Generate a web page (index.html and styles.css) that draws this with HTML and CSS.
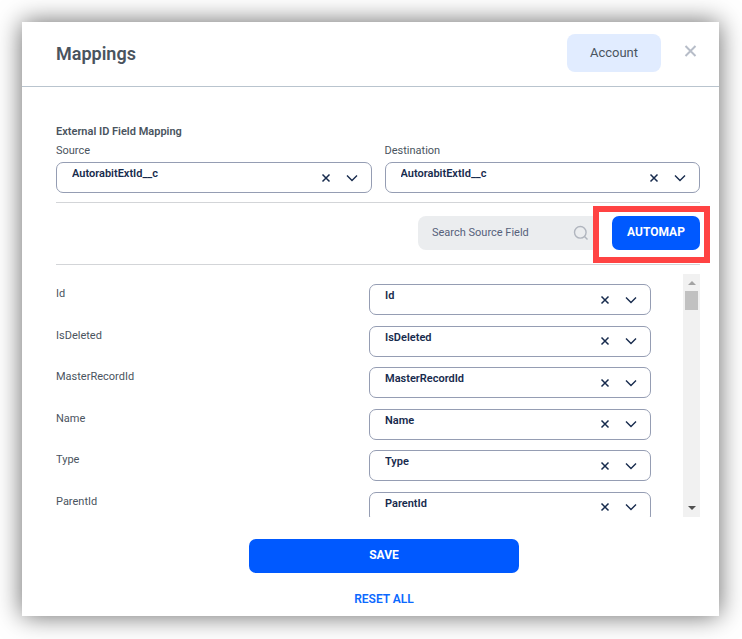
FILE: index.html
```html
<!DOCTYPE html>
<html lang="en">
<head>
<meta charset="utf-8">
<title>Mappings</title>
<link rel="stylesheet" href="styles.css">
</head>
<body>
<svg class="defs" aria-hidden="true">
  <symbol id="cross" viewBox="0 0 10 10"><path d="M1.5 1.5l7 7M8.5 1.5l-7 7"/></symbol>
  <symbol id="chevron" viewBox="0 0 12 8"><path d="M1 1.5l5 5 5-5"/></symbol>
</svg>
<main class="modal">
  <header class="header">
    <h1 class="title">Mappings</h1>
    <button class="object" type="button">Account</button>
    <button class="close" type="button" aria-label="Close"><svg viewBox="0 0 12 12"><path d="M1 1l10 10M11 1L1 11"/></svg></button>
  </header>
  <div class="body">
    <h2 class="subtitle">External ID Field Mapping</h2>
    <div class="pair">
      <div class="field">
        <label class="label" for="source">Source</label>
        <div class="picker">
          <select id="source"><option>AutorabitExtId__c</option></select>
          <button class="clear" type="button" aria-label="Clear source"><svg><use href="#cross"/></svg></button>
          <svg class="arrow"><use href="#chevron"/></svg>
        </div>
      </div>
      <div class="field">
        <label class="label" for="destination">Destination</label>
        <div class="picker">
          <select id="destination"><option>AutorabitExtId__c</option></select>
          <button class="clear" type="button" aria-label="Clear destination"><svg><use href="#cross"/></svg></button>
          <svg class="arrow"><use href="#chevron"/></svg>
        </div>
      </div>
    </div>
    <div class="toolbar">
      <div class="search">
        <input type="text" placeholder="Search Source Field" aria-label="Search Source Field">
        <svg viewBox="0 0 16 16"><circle cx="7.3" cy="7.3" r="5.8"/><path d="M11.5 11.5l3 3"/></svg>
      </div>
      <div class="highlight"><button class="primary automap" type="button">AUTOMAP</button></div>
    </div>
    <div class="mappings">
      <div class="list">
        <div class="rows">
          <div class="row">
            <label class="label" for="f1">Id</label>
            <div class="picker"><select id="f1"><option>Id</option></select><button class="clear" type="button" aria-label="Clear Id"><svg><use href="#cross"/></svg></button><svg class="arrow"><use href="#chevron"/></svg></div>
          </div>
          <div class="row">
            <label class="label" for="f2">IsDeleted</label>
            <div class="picker"><select id="f2"><option>IsDeleted</option></select><button class="clear" type="button" aria-label="Clear IsDeleted"><svg><use href="#cross"/></svg></button><svg class="arrow"><use href="#chevron"/></svg></div>
          </div>
          <div class="row">
            <label class="label" for="f3">MasterRecordId</label>
            <div class="picker"><select id="f3"><option>MasterRecordId</option></select><button class="clear" type="button" aria-label="Clear MasterRecordId"><svg><use href="#cross"/></svg></button><svg class="arrow"><use href="#chevron"/></svg></div>
          </div>
          <div class="row">
            <label class="label" for="f4">Name</label>
            <div class="picker"><select id="f4"><option>Name</option></select><button class="clear" type="button" aria-label="Clear Name"><svg><use href="#cross"/></svg></button><svg class="arrow"><use href="#chevron"/></svg></div>
          </div>
          <div class="row">
            <label class="label" for="f5">Type</label>
            <div class="picker"><select id="f5"><option>Type</option></select><button class="clear" type="button" aria-label="Clear Type"><svg><use href="#cross"/></svg></button><svg class="arrow"><use href="#chevron"/></svg></div>
          </div>
          <div class="row">
            <label class="label" for="f6">ParentId</label>
            <div class="picker"><select id="f6"><option>ParentId</option></select><button class="clear" type="button" aria-label="Clear ParentId"><svg><use href="#cross"/></svg></button><svg class="arrow"><use href="#chevron"/></svg></div>
          </div>
        </div>
      </div>
      <div class="scrollbar" aria-hidden="true">
        <svg class="up" viewBox="0 0 8 4"><path d="M4 0l4 4H0z"/></svg>
        <div class="thumb"></div>
        <svg class="down" viewBox="0 0 8 4"><path d="M0 0h8L4 4z"/></svg>
      </div>
    </div>
  </div>
  <footer class="footer">
    <button class="primary save" type="button">SAVE</button>
    <button class="reset" type="button">RESET ALL</button>
  </footer>
</main>
</body>
</html>
```
FILE: styles.css
```css
* {
  box-sizing: border-box;
}

body {
  margin: 0;
  padding: 22px 23px 23px 22px;
  background: #fff;
  color: #4a545e;
  font: 11px/18px Roboto, "Liberation Sans", sans-serif;
}

button,
input,
select {
  margin: 0;
  padding: 0;
  border: 0;
  background: none;
  color: inherit;
  font: inherit;
}

svg {
  display: block;
  fill: none;
  stroke: #172b4d;
}

.defs {
  display: none;
}

.modal {
  background: #fff;
  box-shadow: 0 0 24px rgba(0, 0, 0, 0.6);
}

.header {
  display: flex;
  align-items: flex-start;
  height: 65px;
  padding: 12px 22px 0 34px;
  border-bottom: 1px solid #b9c4ce;
}

.title {
  flex: 1;
  margin: 0;
  font-size: 18px;
  line-height: 40px;
  font-weight: 600;
}

.object {
  width: 94px;
  height: 38px;
  border-radius: 8px;
  background: #e1ecff;
  font-size: 13px;
}

.close {
  margin: 11px 0 0 23px;
}

.close svg {
  width: 13px;
  height: 12px;
  stroke: #b7bdc8;
  stroke-width: 2;
}

.body {
  padding: 36px 19px 0 34px;
}

.subtitle {
  margin: 0 0 1px;
  font-size: 11px;
  font-weight: 600;
}

.pair {
  display: grid;
  grid-template-columns: 1fr 1fr;
  gap: 13px;
  padding-bottom: 9px;
  border-bottom: 1px solid #d3d5d8;
}

.label {
  display: block;
}

.field .label {
  margin-bottom: 2px;
}

.picker {
  display: grid;
  grid-template-columns: 1fr 20px 32px 3px;
  align-items: center;
  height: 31px;
  border: 1px solid #959db3;
  border-radius: 7px;
}

.picker select {
  grid-area: 1 / 1 / 2 / 5;
  height: 29px;
  padding: 0 58px 7px 15px;
  appearance: none;
  color: #172b4d;
  font-weight: 600;
}

.clear {
  grid-area: 1 / 2;
  justify-self: center;
}

.clear svg {
  width: 10px;
  height: 10px;
  stroke-width: 1.5;
}

.arrow {
  grid-area: 1 / 3;
  justify-self: center;
  width: 12px;
  height: 8px;
  stroke-width: 1.4;
  pointer-events: none;
}

.toolbar {
  display: flex;
  justify-content: flex-end;
  padding: 13px 0 14px;
  border-bottom: 1px solid #d3d5d8;
}

.search {
  display: flex;
  align-items: center;
  width: 194px;
  height: 34px;
  padding: 0 23px 0 14px;
  border-radius: 8px;
  background: #ebedef;
}

.search input {
  flex: 1;
  min-width: 0;
  outline: 0;
}

.search input::placeholder {
  color: #56617b;
}

.search svg {
  width: 16px;
  height: 16px;
  stroke: #b0b5be;
  stroke-width: 1.4;
}

.highlight {
  position: relative;
}

.highlight::before {
  content: "";
  position: absolute;
  inset: -10px -10px -13px -19px;
  border: 6px solid #ff4343;
  background: #fff;
}

.primary {
  height: 34px;
  padding-bottom: 2px;
  border-radius: 7px;
  background: #0059ff;
  color: #fff;
  font-size: 12px;
  font-weight: 700;
}

.automap {
  position: relative;
  width: 88px;
}

.mappings {
  display: flex;
  height: 243px;
  margin-top: 9px;
}

.list {
  flex: 1;
  padding: 10px 32px 0 0;
  overflow-y: auto;
  scrollbar-width: none;
}

.rows {
  display: grid;
  grid-template-rows: repeat(6, 1fr);
  height: 249px;
}

.row {
  display: grid;
  grid-template-columns: 313fr 282fr;
  align-items: start;
}

.row .label {
  padding-top: 1px;
}

.scrollbar {
  display: flex;
  flex-direction: column;
  align-items: center;
  width: 17px;
  padding: 7px 0;
  background: #f1f1f1;
}

.scrollbar svg {
  width: 8px;
  height: 4px;
  stroke: none;
}

.up {
  fill: #a3a3a3;
}

.down {
  margin-top: auto;
  fill: #505050;
}

.thumb {
  width: 13px;
  height: 19px;
  margin-top: 6px;
  background: #c1c1c1;
}

.footer {
  display: flex;
  flex-direction: column;
  align-items: center;
  gap: 17px;
  padding: 22px 0 8px 27px;
}

.save {
  width: 270px;
}

.reset {
  color: #0b69ff;
  font-size: 12px;
  font-weight: 600;
}
```
